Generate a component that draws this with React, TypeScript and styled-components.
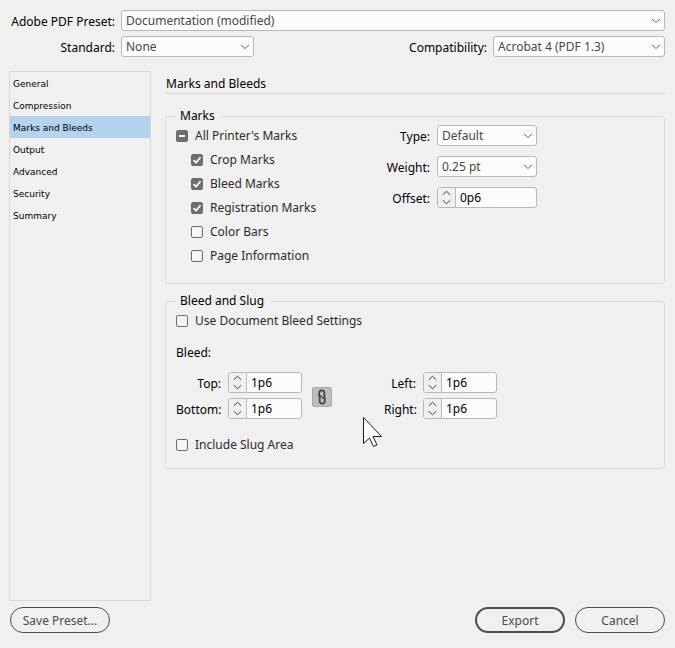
import React, { useEffect, useId, useRef, useState } from "react";
import styled, { createGlobalStyle, css } from "styled-components";

const GlobalStyle = createGlobalStyle`
  *, *::before, *::after { box-sizing: border-box; }
  body { margin: 0; background: #f0f0f0; }
  body, button, input, select {
    font-family: "Noto Sans", "Open Sans", sans-serif;
    font-size: 12px;
    line-height: 16px;
    color: #000;
  }
`;

const Dialog = styled.main`
  display: flex;
  flex-direction: column;
  min-height: 100vh;
  padding: 10px 10px 15px;
`;

const Header = styled.header`
  display: grid;
  grid-template-columns: 105px minmax(0, 1fr);
  gap: 5px 6px;
  align-items: center;
`;

const HeaderRow = styled.div`
  display: flex;
  align-items: center;
  justify-content: space-between;
`;

const Pair = styled.div`
  display: flex;
  align-items: center;
  gap: 6px;
`;

const Label = styled.label`
  padding-top: 2px;
  text-align: right;
  white-space: nowrap;
`;

const SelectFrame = styled.span<{ $width?: number }>`
  display: grid;
  align-items: center;
  width: ${(p) => (p.$width ? `${p.$width}px` : "100%")};
`;

const SelectControl = styled.select`
  grid-area: 1 / 1;
  appearance: none;
  width: 100%;
  height: 21px;
  padding: 1px 20px 0 4px;
  border: 1px solid #b9b9b9;
  border-radius: 3px;
  background: #fcfcfc;
  color: #484848;
`;

const SelectArrow = styled.svg`
  grid-area: 1 / 1;
  justify-self: end;
  margin-right: 4px;
  pointer-events: none;
`;

const Body = styled.div`
  display: flex;
  flex: 1;
  gap: 14px;
  margin-top: 14px;
`;

const Sidebar = styled.nav`
  flex: 0 0 142px;
  margin-left: -1px;
  border: 1px solid #d8d8d8;
`;

const SidebarItem = styled.button<{ $active: boolean }>`
  display: block;
  width: 100%;
  height: 22px;
  padding: 1px 3px 0;
  border: 0;
  background: ${(p) => (p.$active ? "#b5d2ef" : "transparent")};
  font-family: "DejaVu Sans", sans-serif;
  font-size: 9px;
  text-align: left;
`;

const Content = styled.section`
  flex: 1;
  min-width: 0;
`;

const Title = styled.h1`
  margin: 0 0 14px;
  padding: 5px 1px 1px;
  border-bottom: 1px solid #d8d8d8;
  font-size: 12px;
  font-weight: 400;
`;

const Group = styled.fieldset`
  min-width: 0;
  margin: 0 0 9px;
  padding: 0 10px 11px;
  border: 1px solid #dadada;
  border-radius: 3px;
`;

const Legend = styled.legend`
  padding: 0 6px 0 4px;
`;

const MarksGrid = styled.div`
  display: grid;
  grid-template-columns: 200px minmax(0, 1fr);
  padding-bottom: 4px;
`;

const CheckColumn = styled.div`
  display: flex;
  flex-direction: column;
`;

const CheckRow = styled.label<{ $nested?: boolean }>`
  display: flex;
  align-items: center;
  gap: 7px;
  height: 24px;
  padding-left: ${(p) => (p.$nested ? 15 : 0)}px;
  color: #2b2b2b;
`;

const CheckFrame = styled.span`
  display: grid;
  width: 12px;
  height: 12px;
`;

const filledBox = css`
  background: #6e6e6e;
`;

const CheckInput = styled.input`
  grid-area: 1 / 1;
  appearance: none;
  width: 12px;
  height: 12px;
  margin: 0;
  border: 1px solid #6e6e6e;
  border-radius: 2px;
  background: #f5f5f5;
  &:checked, &:indeterminate { ${filledBox} }
`;

const CheckGlyph = styled.svg`
  grid-area: 1 / 1;
  pointer-events: none;
`;

const MarkSettings = styled.div`
  display: grid;
  grid-template-columns: 54px 100px;
  gap: 10px 7px;
  align-content: start;
  align-items: center;
  padding-top: 1px;
`;

const SpinFrame = styled.div`
  display: flex;
  height: 21px;
  border: 1px solid #b9b9b9;
  border-radius: 3px;
  background: #fcfcfc;
  overflow: hidden;
`;

const SpinButtons = styled.div`
  display: flex;
  flex: 0 0 18px;
  flex-direction: column;
  border-right: 1px solid #b9b9b9;
  background: #f0f0f0;
`;

const SpinButton = styled.button`
  display: flex;
  flex: 1;
  align-items: center;
  justify-content: center;
  min-height: 0;
  padding: 0;
  border: 0;
  background: none;
`;

const SpinInput = styled.input`
  flex: 1;
  min-width: 0;
  padding: 0 4px;
  border: 0;
  background: transparent;
`;

const BleedHeading = styled.div`
  margin: 12px 0 11px;
`;

const BleedFields = styled.div`
  display: flex;
  align-items: center;
`;

const BleedColumn = styled.div<{ $label: number }>`
  display: grid;
  grid-template-columns: ${(p) => p.$label}px 74px;
  gap: 5px 7px;
  align-items: center;
`;

const LinkButton = styled.button`
  display: flex;
  align-items: center;
  justify-content: center;
  width: 20px;
  height: 20px;
  margin: 2px 52px 0 10px;
  padding: 0;
  border: 1px solid #a9a9a9;
  border-radius: 2px;
  background: #bdbdbd;
`;

const SlugRow = styled.div`
  margin-top: 14px;
`;

const Footer = styled.footer`
  display: flex;
  gap: 10px;
  margin-top: 6px;
`;

const PillButton = styled.button<{ $primary?: boolean; $width: number; $push?: boolean }>`
  width: ${(p) => p.$width}px;
  height: 26px;
  margin-right: ${(p) => (p.$push ? "auto" : 0)};
  padding: 2px 0 0;
  border: ${(p) => (p.$primary ? 2 : 1)}px solid #4b4b4b;
  border-radius: 13px;
  background: transparent;
  color: #4b4b4b;
`;

const Pointer = styled.svg`
  position: absolute;
  left: 362px;
  top: 416px;
  pointer-events: none;
`;

function Select({ id, value, width }: { id: string; value: string; width?: number }) {
  return (
    <SelectFrame $width={width}>
      <SelectControl id={id} defaultValue={value}>
        <option>{value}</option>
      </SelectControl>
      <SelectArrow width="10" height="6" viewBox="0 0 10 6" fill="none" stroke="#6a6a6a" aria-hidden="true">
        <path d="M1 1 5 4.5 9 1" />
      </SelectArrow>
    </SelectFrame>
  );
}

type Mark = "on" | "off" | "mixed";

function Check({ text, initial, nested }: { text: string; initial: Mark; nested?: boolean }) {
  const [state, setState] = useState<Mark>(initial);
  const ref = useRef<HTMLInputElement>(null);
  useEffect(() => {
    if (ref.current) ref.current.indeterminate = state === "mixed";
  }, [state]);
  return (
    <CheckRow $nested={nested}>
      <CheckFrame>
        <CheckInput
          ref={ref}
          type="checkbox"
          checked={state === "on"}
          onChange={(e) => setState(e.target.checked ? "on" : "off")}
        />
        <CheckGlyph width="12" height="12" viewBox="0 0 12 12" fill="none" stroke="#fff" aria-hidden="true">
          {state === "on" && <path d="M2.5 6.2 5 8.7 9.5 3.2" strokeWidth="1.8" />}
          {state === "mixed" && <path d="M3 6H9" strokeWidth="2" />}
        </CheckGlyph>
      </CheckFrame>
      {text}
    </CheckRow>
  );
}

function SpinField({ label, initial }: { label: string; initial: string }) {
  const id = useId();
  const [value, setValue] = useState(initial);
  const step = (by: number) =>
    setValue((v) => {
      const [picas, points] = v.split("p").map((n) => Number(n) || 0);
      const total = Math.max(0, picas * 12 + points + by);
      return `${Math.floor(total / 12)}p${total % 12}`;
    });
  return (
    <>
      <Label htmlFor={id}>{label}</Label>
      <SpinFrame>
        <SpinButtons>
          <SpinButton type="button" aria-label="Increase" onClick={() => step(1)}>
            <svg width="9" height="6" viewBox="0 0 9 6" fill="none" stroke="#3c3c3c">
              <path d="M.8 4.8 4.5 1.3 8.2 4.8" />
            </svg>
          </SpinButton>
          <SpinButton type="button" aria-label="Decrease" onClick={() => step(-1)}>
            <svg width="9" height="6" viewBox="0 0 9 6" fill="none" stroke="#3c3c3c">
              <path d="M.8 1.2 4.5 4.7 8.2 1.2" />
            </svg>
          </SpinButton>
        </SpinButtons>
        <SpinInput id={id} value={value} onChange={(e) => setValue(e.target.value)} />
      </SpinFrame>
    </>
  );
}

const sections = ["General", "Compression", "Marks and Bleeds", "Output", "Advanced", "Security", "Summary"];

export default function App() {
  const [active, setActive] = useState("Marks and Bleeds");
  return (
    <Dialog>
      <GlobalStyle />
      <Header>
        <Label htmlFor="preset">Adobe PDF Preset:</Label>
        <Select id="preset" value="Documentation (modified)" />
        <Label htmlFor="standard">Standard:</Label>
        <HeaderRow>
          <Select id="standard" value="None" width={133} />
          <Pair>
            <Label htmlFor="compatibility">Compatibility:</Label>
            <Select id="compatibility" value="Acrobat 4 (PDF 1.3)" width={172} />
          </Pair>
        </HeaderRow>
      </Header>

      <Body>
        <Sidebar>
          {sections.map((name) => (
            <SidebarItem key={name} type="button" $active={name === active} onClick={() => setActive(name)}>
              {name}
            </SidebarItem>
          ))}
        </Sidebar>

        <Content>
          <Title>Marks and Bleeds</Title>

          <Group>
            <Legend>Marks</Legend>
            <MarksGrid>
              <CheckColumn>
                <Check text="All Printer's Marks" initial="mixed" />
                <Check text="Crop Marks" initial="on" nested />
                <Check text="Bleed Marks" initial="on" nested />
                <Check text="Registration Marks" initial="on" nested />
                <Check text="Color Bars" initial="off" nested />
                <Check text="Page Information" initial="off" nested />
              </CheckColumn>
              <MarkSettings>
                <Label htmlFor="mark-type">Type:</Label>
                <Select id="mark-type" value="Default" />
                <Label htmlFor="mark-weight">Weight:</Label>
                <Select id="mark-weight" value="0.25 pt" />
                <SpinField label="Offset:" initial="0p6" />
              </MarkSettings>
            </MarksGrid>
          </Group>

          <Group>
            <Legend>Bleed and Slug</Legend>
            <Check text="Use Document Bleed Settings" initial="off" />
            <BleedHeading>Bleed:</BleedHeading>
            <BleedFields>
              <BleedColumn $label={45}>
                <SpinField label="Top:" initial="1p6" />
                <SpinField label="Bottom:" initial="1p6" />
              </BleedColumn>
              <LinkButton type="button" aria-label="Make all settings the same" aria-pressed="true">
                <svg width="10" height="16" viewBox="0 0 10 16" fill="none" stroke="#454545" strokeWidth="1.7">
                  <path d="M3.2 8.6A2 2 0 0 1 2.2 7V4a2.6 2.6 0 0 1 5.2 0v3A2.2 2.2 0 0 1 5 9.2" />
                  <path d="M6.8 7.4A2 2 0 0 1 7.8 9v3a2.6 2.6 0 0 1-5.2 0V9.4A2.2 2.2 0 0 1 5 7" />
                </svg>
              </LinkButton>
              <BleedColumn $label={32}>
                <SpinField label="Left:" initial="1p6" />
                <SpinField label="Right:" initial="1p6" />
              </BleedColumn>
            </BleedFields>
            <SlugRow>
              <Check text="Include Slug Area" initial="off" />
            </SlugRow>
          </Group>
        </Content>
      </Body>

      <Footer>
        <PillButton type="button" $width={100} $push>Save Preset...</PillButton>
        <PillButton type="button" $width={90} $primary>Export</PillButton>
        <PillButton type="button" $width={90}>Cancel</PillButton>
      </Footer>

      <Pointer width="22" height="32" viewBox="0 0 22 32" fill="#fff" stroke="#1c1c28" aria-hidden="true">
        <path d="M1.5 1.5V27.5L7.5 22 11.5 30.5 15 29 11 20.5H19.5Z" />
      </Pointer>
    </Dialog>
  );
}
